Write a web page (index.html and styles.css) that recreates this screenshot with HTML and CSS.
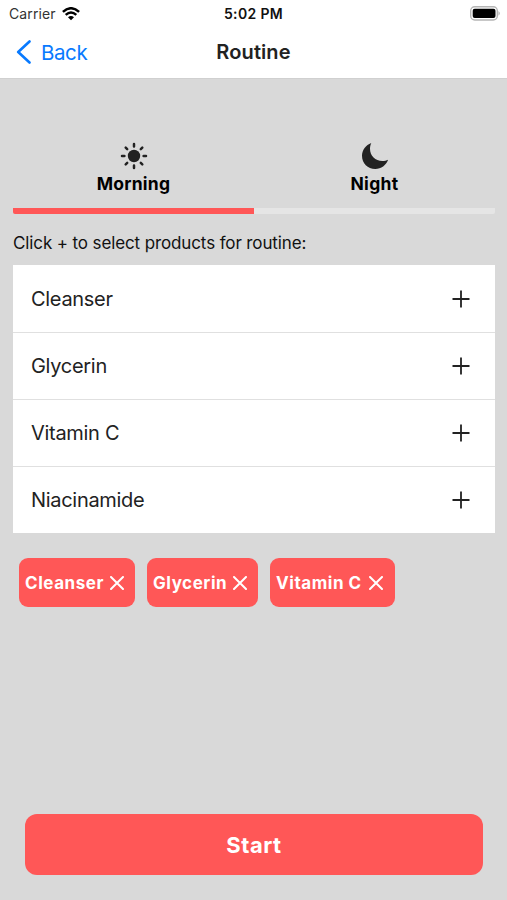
FILE: index.html
```html
<!DOCTYPE html>
<html lang="en">
<head>
<meta charset="utf-8">
<title>Routine</title>
<link rel="stylesheet" href="styles.css">
</head>
<body>
<header class="header">
  <div class="status">
    <div class="carrier"><span class="carrier-name">Carrier</span>
      <svg class="wifi" width="18" height="14" viewBox="0 0 18 14" fill="none" stroke="#000" stroke-width="2.5"><path d="M.9 4.9Q9-2.4 17.100 4.900M3.700 7.900Q9 3.200 14.300 7.900"/><path d="M6 10.200Q9 7.800 12 10.200L9 13.300Z" fill="#000" stroke="none"/></svg>
    </div>
    <span class="time">5:02 PM</span>
    <svg class="battery" width="31" height="15" viewBox="0 0 31 15"><rect x=".7" y=".7" width="26.600" height="13.300" rx="4" fill="#fff" stroke="#b5b5b5" stroke-width="1.400"/><rect x="2.700" y="2.700" width="22.800" height="9.300" rx="2" fill="#000"/><path d="M28.500 5Q31 7.300 28.500 9.700Z" fill="#aaa"/></svg>
  </div>
  <nav class="nav">
    <a class="back"><svg width="15" height="24" viewBox="0 0 15 24" fill="none" stroke="#087aff" stroke-width="2.600" stroke-linecap="round" stroke-linejoin="round"><path d="M13.500 1.500L2.200 12l11.300 10.500"/></svg><span class="back-label">Back</span></a>
    <h1 class="title">Routine</h1>
    <span></span>
  </nav>
</header>
<main class="main">
  <div class="tabs">
    <div class="tab active">
      <svg width="28" height="28" viewBox="0 0 28 28" stroke="#222" stroke-width="2.500" stroke-linecap="round"><circle cx="14" cy="14" r="6.200" fill="#222" stroke="none"/><path d="M14 2v2.400M14 23.600V26M2 14h2.400M23.600 14H26M5.700 5.700l1.500 1.500M20.800 20.800l1.500 1.500M5.700 22.300l1.500-1.500M20.800 7.200l1.500-1.500"/></svg>
      <span class="tab-label morning">Morning</span>
    </div>
    <div class="tab">
      <svg width="28" height="28" viewBox="0 0 28 28"><path d="M10.300.9C9.500 2.600 9 4.500 9 6.700C9 13.700 14.400 19 21.400 19C23.600 19 25.400 18.600 27.100 17.800C25.100 23.200 20.200 27 14.300 27C6.700 27 1 21.300 1 13.700C1 7.900 4.800 2.900 10.300.9Z" fill="#222"/></svg>
      <span class="tab-label night">Night</span>
    </div>
  </div>
  <p class="hint">Click + to select products for routine:</p>
  <ul class="list">
    <li class="row"><span>Cleanser</span><svg class="plus" viewBox="0 0 18 18"><path d="M9 .5v17M.5 9h17"/></svg></li>
    <li class="row"><span>Glycerin</span><svg class="plus" viewBox="0 0 18 18"><path d="M9 .5v17M.5 9h17"/></svg></li>
    <li class="row"><span>Vitamin C</span><svg class="plus" viewBox="0 0 18 18"><path d="M9 .5v17M.5 9h17"/></svg></li>
    <li class="row"><span>Niacinamide</span><svg class="plus" viewBox="0 0 18 18"><path d="M9 .5v17M.5 9h17"/></svg></li>
  </ul>
  <div class="chips">
    <button class="chip chip-cleanser"><span>Cleanser</span><svg class="close" viewBox="0 0 14 14"><path d="M1 1l12 12M13 1L1 13"/></svg></button>
    <button class="chip chip-glycerin"><span>Glycerin</span><svg class="close" viewBox="0 0 14 14"><path d="M1 1l12 12M13 1L1 13"/></svg></button>
    <button class="chip chip-vitamin"><span>Vitamin C</span><svg class="close" viewBox="0 0 14 14"><path d="M1 1l12 12M13 1L1 13"/></svg></button>
  </div>
  <button class="start">Start</button>
</main>
</body>
</html>
```
FILE: styles.css
```css
* { box-sizing: border-box; }
body {
  margin: 0;
  height: 900px;
  display: flex;
  flex-direction: column;
  overflow: hidden;
  background: #d9d9d9;
  color: #222;
  font-family: Inter, "Liberation Sans", sans-serif;
}
svg { display: block; flex: none; }
button { border: 0; font: inherit; color: #fff; background: #ff5757; }
.header { height: 79px; background: #fff; border-bottom: 1px solid #d0d0d0; flex: none; }
.status, .nav { display: grid; grid-template-columns: 1fr auto 1fr; align-items: center; }
.status { height: 27px; padding: 0 7px 0 9px; }
.carrier { display: flex; align-items: center; gap: 6px; font-size: 14px; color: #333; }
.carrier-name { letter-spacing: .1px; }
.time { font-size: 14px; font-weight: 600; color: #111; letter-spacing: .35px; margin-left: -2px; }
.battery { justify-self: end; margin-right: -1px; }
.nav { height: 50px; padding: 0 16px; }
.back { display: flex; align-items: center; gap: 10px; color: #087aff; font-size: 20.500px; letter-spacing: -.4px; }
.title { margin: 0; font-size: 20px; font-weight: 600; letter-spacing: .1px; }
.main { flex: 1; display: flex; flex-direction: column; padding: 63px 12px 25px 13px; }
.tabs { display: flex; height: 72px; border-radius: 2px; overflow: hidden; }
.tab { flex: 1; display: flex; flex-direction: column; align-items: center; border-bottom: 6px solid #e5e5e5; color: #000; }
.tab.active { border-color: #ff5757; }
.tab-label { font-size: 17.500px; line-height: 28px; font-weight: 700; }
.morning { letter-spacing: .25px; }
.night { letter-spacing: .35px; }
.hint { margin: 19px 0 11px; font-size: 17px; line-height: 21px; letter-spacing: -.12px; color: #111; }
.list { margin: 0; padding: 0; list-style: none; background: #fff; }
.row { height: 67px; padding: 0 25px 0 18px; display: flex; align-items: center; justify-content: space-between; font-size: 20px; letter-spacing: -.3px; }
.row + .row { border-top: 1px solid #e0e0e0; }
.plus { width: 18px; height: 18px; fill: none; stroke: #222; stroke-width: 1.8; }
.chips { display: flex; gap: 12px; padding: 0 6px; margin-top: 25px; }
.chip { height: 49px; padding: 0 6px; display: flex; align-items: center; border-radius: 9px; font-size: 17px; font-weight: 700; letter-spacing: .55px; white-space: nowrap; }
.chip span { flex: 1; text-align: left; }
.chip-cleanser { width: 116px; padding-right: 11px; }
.chip-glycerin { width: 111px; padding-right: 11px; }
.chip-vitamin { width: 125px; padding-right: 12px; }
.close { width: 14px; height: 14px; fill: none; stroke: #fff; stroke-width: 2; stroke-linecap: round; }
.start { height: 61px; margin: auto 12px 0; border-radius: 12px; font-size: 22px; font-weight: 700; letter-spacing: .5px; }
```
